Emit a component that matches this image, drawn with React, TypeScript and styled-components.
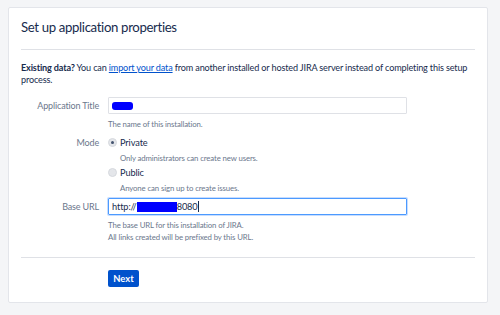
import React from 'react';
import styled, { createGlobalStyle } from 'styled-components';

const GlobalStyle = createGlobalStyle`
  html, body {
    margin: 0;
    padding: 0;
    background: #f4f5f7;
    font-family: "Lato", "Liberation Sans", sans-serif;
    color: #172b4d;
  }
`;

const App = () => {
  return (
    <>
      <GlobalStyle />
      <Page>
        <Card>
          <Title>Set up application properties</Title>
          <Rule top={12} />
          <Intro>
            <strong>Existing data?</strong> You can <IntroLink href="#">import your data</IntroLink> from
            another installed or hosted JIRA server instead of completing this setup process.
          </Intro>

          <Form>
            <Label>Application Title</Label>
            <Field gap={4}>
              <FakeInput>
                <Redact width={21} height={8} round />
              </FakeInput>
              <Hint>The name of this installation.</Hint>
            </Field>

            <Label>Mode</Label>
            <Field gap={4}>
              <RadioRow>
                <Radio checked />
                <RadioText>Private</RadioText>
              </RadioRow>
              <RadioHint>Only administrators can create new users.</RadioHint>
              <RadioRow>
                <Radio />
                <RadioText>Public</RadioText>
              </RadioRow>
              <RadioHint>Anyone can sign up to create issues.</RadioHint>
            </Field>

            <Label>Base URL</Label>
            <Field gap={0}>
              <FakeInput focused>
                http://
                <Redact width={40} height={10} />
                8080
                <Caret />
              </FakeInput>
              <Hint>The base URL for this installation of JIRA.</Hint>
              <Hint>All links created will be prefixed by this URL.</Hint>
            </Field>
          </Form>

          <Rule top={14} />
          <Buttons>
            <NextButton>Next</NextButton>
          </Buttons>
        </Card>
      </Page>
    </>
  );
};

export default App;

const Page = styled.div`
  width: 500px;
  height: 315px;
  padding: 7px 12px 0 8px;
  box-sizing: border-box;
`;

const Card = styled.div`
  background: #fff;
  border: 1px solid #e3e5ea;
  border-radius: 2px;
  padding: 9px 12px 14px 12px;
  box-sizing: border-box;
  height: 296px;
`;

const Title = styled.h1`
  margin: 0;
  font-size: 13.2px;
  letter-spacing: -0.35px;
  font-weight: 400;
  line-height: 20px;
  color: #172b4d;
`;

const Rule = styled.hr<{ top: number }>`
  border: 0;
  border-top: 1px solid #dfe1e6;
  margin: ${({ top }) => top}px 0 0 0;
`;

const Intro = styled.p`
  margin: 12px 0 0 0;
  font-size: 9.1px;
  letter-spacing: -0.15px;
  line-height: 12px;
  color: #172b4d;

  strong {
    font-weight: 700;
  }
`;

const IntroLink = styled.a`
  color: #0052cc;
  text-decoration: underline;
`;

const Form = styled.div`
  display: grid;
  grid-template-columns: 78px 299px;
  column-gap: 9px;
  margin-top: 11px;
  align-items: start;
`;

const Label = styled.div`
  text-align: right;
  font-size: 9px;
  letter-spacing: -0.15px;
  line-height: 17px;
  color: #6b778c;
`;

const Field = styled.div<{ gap: number }>`
  display: flex;
  flex-direction: column;
  margin-bottom: ${({ gap }) => gap}px;
`;

const FakeInput = styled.div<{ focused?: boolean }>`
  height: 17px;
  box-sizing: border-box;
  border: ${({ focused }) => (focused ? '1px solid #4c9aff' : '1px solid #dfe1e6')};
  box-shadow: ${({ focused }) => (focused ? '0 0 0 1px #c7ddff' : 'none')};
  border-radius: 1px;
  display: flex;
  align-items: center;
  padding: 0 3px;
  font-size: 9.2px;
  letter-spacing: -0.1px;
  color: #172b4d;
`;

const Redact = styled.span<{ width: number; height: number; round?: boolean }>`
  display: inline-block;
  width: ${({ width }) => width}px;
  height: ${({ height }) => height}px;
  background: #0000ff;
  border-radius: ${({ round }) => (round ? '3px' : '0')};
`;

const Caret = styled.span`
  display: inline-block;
  width: 1px;
  height: 11px;
  background: #172b4d;
`;

const Hint = styled.div`
  font-size: 7.8px;
  letter-spacing: -0.12px;
  line-height: 12px;
  color: #6b778c;
  margin-top: 4px;

  & + & {
    margin-top: 0;
  }
`;

const RadioRow = styled.div`
  display: flex;
  align-items: center;
  height: 14px;
  margin-top: 1px;
`;

const Radio = styled.span<{ checked?: boolean }>`
  width: 9px;
  height: 9px;
  border-radius: 50%;
  background: #e4e6ea;
  border: 1px solid #d6d9de;
  box-sizing: border-box;
  margin: 0 3px 0 0;
  display: flex;
  align-items: center;
  justify-content: center;

  &::after {
    content: '';
    width: 3px;
    height: 3px;
    border-radius: 50%;
    background: ${({ checked }) => (checked ? '#42526e' : 'transparent')};
  }
`;

const RadioText = styled.span`
  font-size: 9.2px;
  letter-spacing: -0.1px;
  color: #172b4d;
`;

const RadioHint = styled.div`
  font-size: 7.8px;
  letter-spacing: -0.12px;
  line-height: 14px;
  padding-top: 2px;
  color: #6b778c;
  padding-left: 12px;
  margin-bottom: -1px;
`;

const Buttons = styled.div`
  padding-left: 87px;
  margin-top: 12px;
`;

const NextButton = styled.button`
  display: block;
  width: 31px;
  height: 17px;
  padding: 0;
  border: 0;
  border-radius: 2px;
  background: #0052cc;
  color: #fff;
  font-family: inherit;
  font-size: 9.4px;
  font-weight: 700;
`;
